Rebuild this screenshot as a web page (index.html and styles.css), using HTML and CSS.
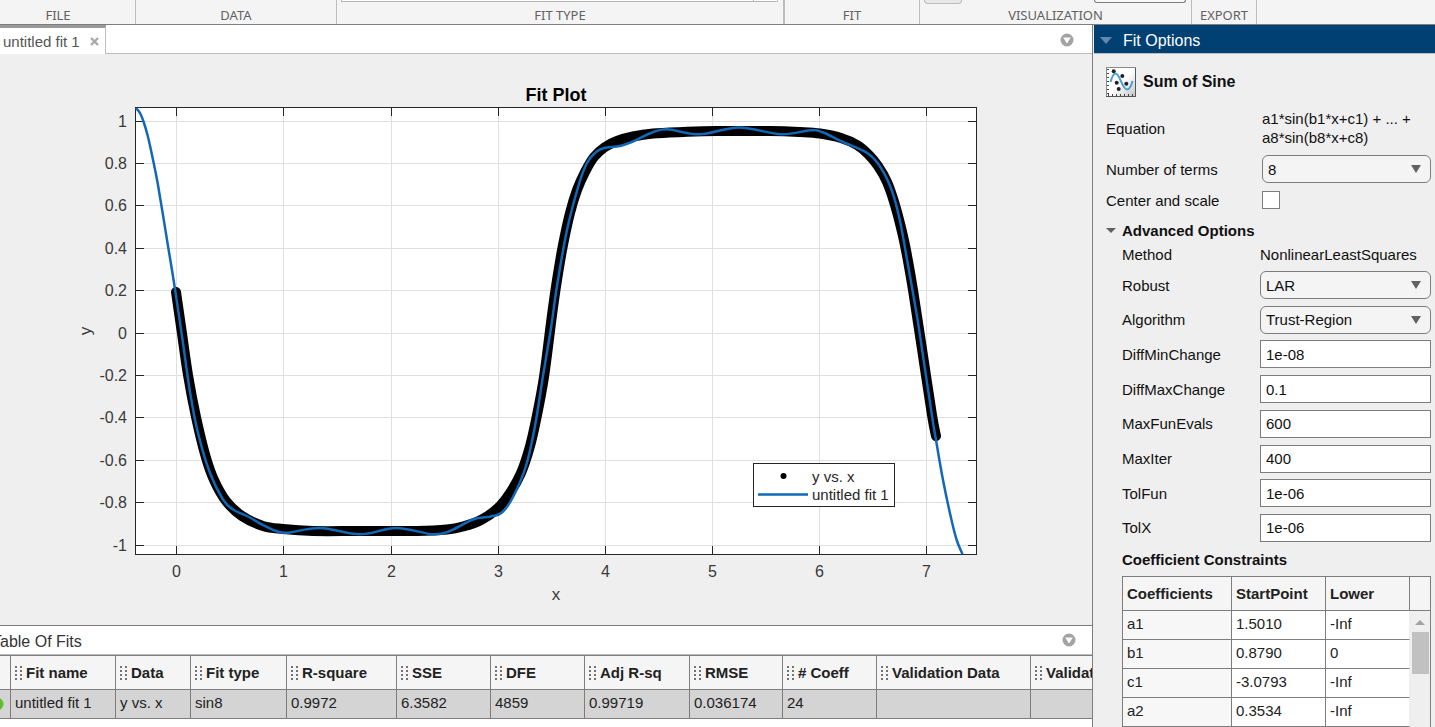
FILE: index.html
```
<!DOCTYPE html>
<html lang="en">
<head>
  <meta charset="UTF-8" />
  <meta name="viewport" content="width=device-width, initial-scale=1.0" />
  <title>Curve Fitter</title>
  <link rel="stylesheet" href="styles.css">
</head>
<body>
  <svg class="defs" aria-hidden="true">
    <symbol id="grip" viewBox="0 0 7 14">
      <path fill="#737373" d="M0 0h2v2H0zM5 0h2v2H5zM0 4h2v2H0zM5 4h2v2H5zM0 8h2v2H0zM5 8h2v2H5zM0 12h2v2H0zM5 12h2v2H5z" />
    </symbol>
    <symbol id="menu" viewBox="0 0 14 14">
      <circle cx="7" cy="7" r="6.5" fill="#a3a3a3" />
      <path fill="#fff" d="M3.2 4.6h7.6L7 10.4z" />
    </symbol>
  </svg>

  <header class="toolstrip">
    <section class="group file"><div class="controls"></div><h2>FILE</h2></section>
    <section class="group data"><div class="controls"></div><h2>DATA</h2></section>
    <section class="group fit-type"><div class="controls"><div class="gallery"><span></span></div></div><h2>FIT TYPE</h2></section>
    <section class="group fit"><div class="controls"></div><h2>FIT</h2></section>
    <section class="group visual"><div class="controls"><button class="tool" aria-label="Plot"></button><button class="tool wide" aria-label="Plot options"></button></div><h2>VISUALIZATION</h2></section>
    <section class="group export"><div class="controls"></div><h2>EXPORT</h2></section>
  </header>

  <div class="workspace">
    <main class="document">
      <nav class="tabs">
        <div class="tab">
          <a href="#plot">untitled fit 1</a>
          <button class="icon-btn" aria-label="Close">
            <svg width="9" height="9" viewBox="0 0 9 9"><path d="M1 1l7 7M8 1l-7 7" stroke="#a8a8a8" stroke-width="2.4" /></svg>
          </button>
        </div>
        <div class="tab-rest">
          <button class="icon-btn" aria-label="Document actions"><svg width="14" height="14"><use href="#menu" /></svg></button>
        </div>
      </nav>

      <div class="plot" id="plot">
        <svg id="chart" viewBox="0 54 1092 571" role="img" aria-label="Fit Plot">
          <rect x="135" y="107" width="842" height="448" fill="#fff" />
          <g id="grid" class="grid"></g>
          <g id="ticks" class="ticks"></g>
          <rect x="135.5" y="107.5" width="841" height="447" class="box" />
          <path id="points" class="points" />
          <path id="curve" class="curve" />
          <g id="labels" class="labels"></g>
          <text x="556" y="101" class="plot-title">Fit Plot</text>
          <text x="556" y="600" class="axis-title">x</text>
          <text x="0" y="0" class="axis-title" transform="translate(91 331) rotate(-90)">y</text>
          <rect x="753.5" y="463.5" width="141" height="43" fill="#fff" stroke="#262626" />
          <circle cx="783.5" cy="476" r="3" />
          <path d="M758 494.5h50" class="curve" />
          <text x="812" y="482" class="legend">y vs. x</text>
          <text x="812" y="500" class="legend">untitled fit 1</text>
        </svg>
      </div>

      <section class="fits">
        <div class="fits-title">
          <h2>Table Of Fits</h2>
          <button class="icon-btn" aria-label="Table actions"><svg width="14" height="14"><use href="#menu" /></svg></button>
        </div>
        <div class="fits-scroll">
          <table class="fits-table">
            <colgroup>
              <col class="c-state"><col class="c-name"><col class="c-data"><col class="c-type"><col class="c-rsq"><col class="c-stat"><col class="c-stat"><col class="c-name"><col class="c-rmse"><col class="c-stat"><col class="c-valid"><col class="c-valid">
            </colgroup>
            <thead>
              <tr>
                <th></th>
                <th><svg class="grip"><use href="#grip" /></svg>Fit name</th>
                <th><svg class="grip"><use href="#grip" /></svg>Data</th>
                <th><svg class="grip"><use href="#grip" /></svg>Fit type</th>
                <th><svg class="grip"><use href="#grip" /></svg>R-square</th>
                <th><svg class="grip"><use href="#grip" /></svg>SSE</th>
                <th><svg class="grip"><use href="#grip" /></svg>DFE</th>
                <th><svg class="grip"><use href="#grip" /></svg>Adj R-sq</th>
                <th><svg class="grip"><use href="#grip" /></svg>RMSE</th>
                <th><svg class="grip"><use href="#grip" /></svg># Coeff</th>
                <th><svg class="grip"><use href="#grip" /></svg>Validation Data</th>
                <th><svg class="grip"><use href="#grip" /></svg>Validation SSE</th>
              </tr>
            </thead>
            <tbody>
              <tr>
                <td class="state"><svg width="4" height="14" viewBox="9 0 4 14"><circle cx="6" cy="7" r="6.5" fill="#5fbe2e" /></svg></td>
                <td>untitled fit 1</td><td>y vs. x</td><td>sin8</td><td>0.9972</td><td>6.3582</td><td>4859</td><td>0.99719</td><td>0.036174</td><td>24</td><td></td><td></td>
              </tr>
            </tbody>
          </table>
        </div>
      </section>
    </main>

    <aside class="panel">
      <h2 class="panel-head"><span class="arrow"></span>Fit Options</h2>
      <form class="options">
        <div class="fit-kind">
          <svg width="30" height="30" viewBox="0 0 30 30">
            <defs>
              <linearGradient id="tile" x1="0" y1="0" x2="1" y2="1">
                <stop offset="0.5" stop-color="#fff" /><stop offset="1" stop-color="#c4c4c4" />
              </linearGradient>
            </defs>
            <rect x="0.5" y="0.5" width="29" height="29" fill="url(#tile)" stroke="#8a8a8a" />
            <path d="M29.5 1v28.5H0" fill="none" stroke="#555" />
            <path d="M2 2v26" stroke="#444" stroke-width="2" stroke-dasharray="1 3" />
            <path d="M2 28h26" stroke="#444" stroke-width="2" stroke-dasharray="1 3" />
            <path d="M4.5 15C6 10 7.5 6.5 9.5 6.5C14 6.500 16 22.5 21 22.5C24 22.5 25.5 18 26.5 14" fill="none" stroke="#4a9fd4" stroke-width="2" />
            <g fill="#222">
              <circle cx="7.7" cy="4.3" r="2" /><circle cx="16.3" cy="9" r="2" /><circle cx="10.7" cy="15.7" r="2" /><circle cx="20.3" cy="16.7" r="2" /><circle cx="12.7" cy="22" r="2" />
            </g>
          </svg>
          <h3>Sum of Sine</h3>
        </div>
        <div class="field equation"><span>Equation</span><span>a1*sin(b1*x+c1) + ... + a8*sin(b8*x+c8)</span></div>
        <div class="field">
          <label for="terms">Number of terms</label>
          <span class="select"><select id="terms"><option>8</option></select></span>
        </div>
        <div class="field check">
          <label for="center">Center and scale</label>
          <input type="checkbox" id="center">
        </div>

        <h3 class="advanced-head"><span class="arrow"></span>Advanced Options</h3>
        <div class="advanced">
          <div class="field method"><span>Method</span><span>NonlinearLeastSquares</span></div>
          <div class="field-list">
            <div class="field"><label for="robust">Robust</label><span class="select"><select id="robust"><option>LAR</option></select></span></div>
            <div class="field"><label for="algo">Algorithm</label><span class="select"><select id="algo"><option>Trust-Region</option></select></span></div>
            <div class="field"><label for="dmin">DiffMinChange</label><input type="text" id="dmin" value="1e-08"></div>
            <div class="field"><label for="dmax">DiffMaxChange</label><input type="text" id="dmax" value="0.1"></div>
            <div class="field"><label for="evals">MaxFunEvals</label><input type="text" id="evals" value="600"></div>
            <div class="field"><label for="iter">MaxIter</label><input type="text" id="iter" value="400"></div>
            <div class="field"><label for="tolfun">TolFun</label><input type="text" id="tolfun" value="1e-06"></div>
            <div class="field"><label for="tolx">TolX</label><input type="text" id="tolx" value="1e-06"></div>
          </div>
          <h3>Coefficient Constraints</h3>
          <div class="coeff-box">
            <table class="coeffs">
              <thead><tr><th>Coefficients</th><th>StartPoint</th><th>Lower</th></tr></thead>
              <tbody>
                <tr><td>a1</td><td>1.5010</td><td>-Inf</td></tr>
                <tr><td>b1</td><td>0.8790</td><td>0</td></tr>
                <tr><td>c1</td><td>-3.0793</td><td>-Inf</td></tr>
                <tr><td>a2</td><td>0.3534</td><td>-Inf</td></tr>
              </tbody>
            </table>
            <div class="scrollbar"><div class="corner"></div><span class="up"></span><div class="thumb"></div></div>
          </div>
        </div>
      </form>
    </aside>
  </div>
  <script src="script.js"></script>
</body>
</html>
```
FILE: styles.css
```
* {
  box-sizing: border-box;
}
body {
  margin: 0;
  height: 100vh;
  display: flex;
  flex-direction: column;
  overflow: hidden;
  background: #efefef;
  color: #111;
  font-family: "Liberation Sans", Arial, sans-serif;
  font-size: 15px;
}
h2, h3 {
  margin: 0;
  font-size: 15px;
}
button, input, select {
  font: inherit;
  color: inherit;
}
.defs {
  display: none;
}
.icon-btn {
  display: flex;
  padding: 0;
  border: none;
  background: none;
}

/* toolstrip */
.toolstrip {
  display: flex;
  flex: none;
  height: 25px;
  background: #f4f4f4;
  border-bottom: 1px solid #7d7d7d;
}
.group {
  flex: none;
  border-right: 1px solid #bdbdbd;
}
.group h2 {
  font: 13px/18px "Noto Sans", sans-serif;
  color: #616161;
  text-align: center;
}
.controls {
  display: flex;
  align-items: flex-start;
  justify-content: space-between;
  height: 6px;
  padding: 0 5px 0 4px;
}
.file {
  width: 155px;
  margin-left: -19px;
}
.data {
  width: 201px;
}
.fit-type {
  flex: 1 1 448px;
  max-width: 448px;
  border-right: 2px solid #bdbdbd;
}
.fit {
  width: 135px;
}
.visual {
  width: 272px;
}
.export {
  width: 65px;
}
.gallery {
  flex: 1;
  height: 2px;
  background: #fff;
  border: 1px solid #b5b5b5;
  border-top: none;
  border-radius: 0 0 4px 0;
}
.gallery span {
  display: block;
  width: 24px;
  height: 1px;
  margin-left: auto;
  border-left: 1px solid #b5b5b5;
}
.tool {
  width: 38px;
  height: 4px;
  padding: 0;
  background: #e8e8e8;
  border: 1px solid #bdbdbd;
  border-top: none;
  border-radius: 0 0 4px 4px;
}
.tool.wide {
  width: 92px;
  height: 3px;
  background: #f8f8f8;
  border-color: #7d7d7d;
}

.workspace {
  flex: 1;
  display: flex;
  min-height: 0;
}
.document {
  flex: 1;
  min-width: 0;
  display: flex;
  flex-direction: column;
}

/* document tabs */
.tabs {
  display: flex;
  height: 29px;
  flex: none;
}
.tab {
  display: flex;
  align-items: center;
  gap: 10px;
  padding: 0 6px 0 3px;
  background: #fff;
  border-top: 3px solid #999;
  border-right: 1px solid #bdbdbd;
}
.tab a {
  color: #555;
  text-decoration: none;
}
.tab-rest {
  flex: 1;
  display: flex;
  align-items: center;
  justify-content: flex-end;
  padding: 2px 18px 0 0;
  background: #fff;
  border-bottom: 1px solid #bdbdbd;
}

/* plot */
.plot {
  flex: 1;
  min-height: 0;
}
.plot svg {
  display: block;
  width: 100%;
  height: 100%;
}
.grid {
  stroke: #dfdfdf;
}
.ticks {
  stroke: #262626;
}
.box {
  fill: none;
  stroke: #262626;
}
.points {
  fill: none;
  stroke: #000;
  stroke-width: 10;
  stroke-linecap: round;
  stroke-linejoin: round;
}
.curve {
  fill: none;
  stroke: #1068b8;
  stroke-width: 2.5;
}
.labels {
  font-size: 16px;
  fill: #3a3a3a;
}
.labels .x-label, .plot-title, .axis-title {
  text-anchor: middle;
}
.labels .y-label {
  text-anchor: end;
}
.plot-title {
  font-size: 18px;
  font-weight: bold;
}
.axis-title {
  font-size: 17px;
  fill: #3a3a3a;
}
.legend {
  font-size: 15px;
  fill: #262626;
}

/* table of fits */
.fits {
  flex: none;
  background: #fff;
  border-top: 1px solid #7d7d7d;
  padding-bottom: 8px;
}
.fits-title {
  display: flex;
  align-items: center;
  justify-content: space-between;
  height: 29px;
  padding-right: 16px;
  border-bottom: 1px solid #bdbdbd;
  overflow: hidden;
}
.fits-title h2 {
  margin: 4px 0 0 -8px;
  font-size: 16px;
  font-weight: normal;
  color: #333;
}
.fits-scroll {
  overflow: hidden;
  border-top: 1px solid #7d7d7d;
}
.fits-table {
  table-layout: fixed;
  width: 1183px;
  border-collapse: separate;
  border-spacing: 0;
  color: #222;
}
.fits-table th, .fits-table td {
  padding: 0 0 0 4px;
  text-align: left;
  white-space: nowrap;
  border-right: 1px solid #7d7d7d;
  border-bottom: 1px solid #7d7d7d;
}
.fits-table th {
  height: 34px;
  background: #f5f5f5;
}
.fits-table td {
  height: 29px;
  padding-bottom: 3px;
  background: #d4d4d4;
}
.fits-table .state {
  padding: 0;
}
.state svg {
  display: block;
}
.grip {
  width: 7px;
  height: 14px;
  margin-right: 4px;
  vertical-align: -2px;
}
.c-state { width: 11px; }
.c-name { width: 105px; }
.c-data { width: 75px; }
.c-type { width: 96px; }
.c-rsq { width: 110px; }
.c-stat { width: 94px; }
.c-rmse { width: 93px; }
.c-valid { width: 154px; }

/* fit options */
.panel {
  width: 343px;
  flex: none;
  border-left: 1px solid #7d7d7d;
  overflow: hidden;
}
.panel-head {
  display: flex;
  align-items: center;
  gap: 11px;
  height: 29px;
  margin-left: 1px;
  padding: 3px 0 0 6px;
  background: #004073;
  border-bottom: 1px solid #bdbdbd;
  color: #fff;
  font-size: 16px;
  font-weight: normal;
}
.arrow {
  border: 6px solid transparent;
  border-top: 7px solid #6489aa;
  border-bottom: none;
}
.options {
  padding: 13px 4px 0 13px;
}
.fit-kind {
  display: flex;
  align-items: center;
  gap: 7px;
}
.fit-kind h3 {
  font-size: 16px;
}
.field {
  display: grid;
  grid-template-columns: 156px 1fr;
  align-items: center;
}
.equation {
  height: 58px;
  padding-top: 4px;
  line-height: 19px;
}
.check {
  height: 34px;
}
.field input[type="checkbox"] {
  appearance: none;
  width: 18px;
  height: 18px;
  margin: 0;
  background: #fff;
  border: 1px solid #7d7d7d;
}
.field input[type="text"] {
  width: 100%;
  height: 28px;
  padding: 0 5px;
  background: #fff;
  border: 1px solid #7d7d7d;
}
.select {
  position: relative;
  display: block;
}
.select select {
  display: block;
  appearance: none;
  width: 100%;
  height: 28px;
  padding: 0 5px;
  background: #f4f4f4;
  border: 1px solid #7d7d7d;
  border-radius: 6px;
}
.select::after {
  content: "";
  position: absolute;
  right: 10px;
  top: 10px;
  border: 5px solid transparent;
  border-top: 8px solid #616161;
  border-bottom: none;
}
.advanced-head {
  display: flex;
  align-items: center;
  gap: 6px;
  height: 26px;
}
.advanced-head .arrow {
  border-width: 5px;
  border-top: 5px solid #616161;
  border-bottom: none;
}
.advanced {
  padding-left: 16px;
}
.advanced .field {
  grid-template-columns: 138px 1fr;
}
.method {
  height: 23px;
}
.field-list {
  display: flex;
  flex-direction: column;
  justify-content: space-between;
  height: 271px;
  margin: 5px 0 9px;
}
.coeff-box {
  display: flex;
  margin-top: 8px;
  border: 1px solid #7d7d7d;
  border-bottom: none;
}
.coeffs {
  flex: 1;
  table-layout: fixed;
  border-collapse: separate;
  border-spacing: 0;
  color: #222;
}
.coeffs th, .coeffs td {
  height: 29px;
  padding: 0 0 3px 4px;
  text-align: left;
  background: #fff;
  border-right: 1px solid #7d7d7d;
  border-bottom: 1px solid #7d7d7d;
}
.coeffs th {
  height: 34px;
  padding-bottom: 0;
  background: #f5f5f5;
}
.coeffs td:first-child {
  background: #f7f7f7;
}
.coeffs td:last-child {
  border-right-color: #efefef;
}
.coeffs th:first-child {
  width: 109px;
}
.coeffs th:nth-child(2) {
  width: 94px;
}
.scrollbar {
  display: flex;
  flex-direction: column;
  align-items: center;
  width: 20px;
}
.corner {
  align-self: stretch;
  height: 34px;
  background: #f5f5f5;
  border-bottom: 1px solid #7d7d7d;
}
.up {
  margin: 9px 0 7px;
  border: 5px solid transparent;
  border-bottom: 5px solid #a3a3a3;
  border-top: none;
}
.thumb {
  width: 17px;
  height: 42px;
  background: #c1c1c1;
}
```
FILE: script.js
```
const NS = "http://www.w3.org/2000/svg";

// measured points, thick black band
const data = [
  [176, 292], [181.5, 330], [188, 375], [196, 417], [205.5, 456], [214, 480], [226, 501],
  [242, 516], [263, 526], [283, 529], [313, 531], [360, 531], [417, 531], [447, 529.5], [463, 526.5],
  [481, 520], [498, 508], [510, 493], [521, 473], [529.5, 448], [536, 420], [544, 377], [552, 315],
  [557, 280], [563, 245], [570, 213], [577, 190], [585, 172], [594, 157], [605, 147], [617, 141],
  [633, 136.5], [653, 133.5], [683, 132], [717, 131], [770, 131], [800, 132], [820, 133.5], [841, 138],
  [857, 145], [868, 154], [878, 166], [887, 182], [895, 205], [903, 236], [908, 261], [913, 290],
  [922, 349], [932, 415], [936, 436]
];

// fitted curve
const fit = [
  [136, 108], [140, 113], [144, 123], [148, 137], [152, 155], [158, 185], [168, 246], [175, 289], [183, 343],
  [190, 392], [198, 433], [210, 473], [223, 499.5], [233, 509.5], [247, 516], [263, 525], [276, 531], [288, 532.7],
  [320, 528], [360, 534.3], [396, 528], [433, 534.3], [450, 531], [473, 519.5], [491, 516.5],
  [502, 512.5], [513, 497], [526, 466], [535, 426], [543, 376], [551, 328], [557, 286], [567, 230],
  [579, 184], [587, 163], [596, 152], [604, 148], [620, 146], [633, 141.5], [651, 133], [667, 129.3],
  [700, 134.3], [739, 127.5], [781, 134.3], [810, 130.3], [822, 132], [843, 142], [868, 153.5],
  [881, 168], [892, 191], [900, 221], [908, 265], [917, 316], [922, 349], [932, 416], [936, 440],
  [943, 480], [951.5, 520], [957, 541], [962.5, 554]
];

// Catmull-Rom spline through the points
function spline(p) {
  let d = `M${p[0]}`;
  for (let i = 0; i < p.length - 1; i++) {
    const a = p[i - 1] || p[i], b = p[i], c = p[i + 1], e = p[i + 2] || c;
    d += `C${b[0] + (c[0] - a[0]) / 6} ${b[1] + (c[1] - a[1]) / 6} ${c[0] - (e[0] - b[0]) / 6} ${c[1] - (e[1] - b[1]) / 6} ${c[0]} ${c[1]}`;
  }
  return d;
}

function add(parent, tag, attrs, text) {
  const el = document.createElementNS(NS, tag);
  for (const k in attrs) el.setAttribute(k, attrs[k]);
  if (text) el.textContent = text;
  document.getElementById(parent).appendChild(el);
}

for (let i = 0; i <= 7; i++) {
  const x = Math.floor(176.8 + i * 107.1) + 0.5;
  add("grid", "path", { d: `M${x} 108V554` });
  add("ticks", "path", { d: `M${x} 108v8M${x} 554v-8` });
  add("labels", "text", { x: x, y: 577, class: "x-label" }, String(i));
}

for (let i = 0; i <= 10; i++) {
  const y = Math.floor(121 + i * 42.4) + 0.5;
  add("grid", "path", { d: `M136 ${y}H976` });
  add("ticks", "path", { d: `M136 ${y}h8M976 ${y}h-8` });
  add("labels", "text", { x: 127, y: y + 5.5, class: "y-label" }, String((5 - i) / 5));
}

document.getElementById("points").setAttribute("d", spline(data));
document.getElementById("curve").setAttribute("d", spline(fit));
```
